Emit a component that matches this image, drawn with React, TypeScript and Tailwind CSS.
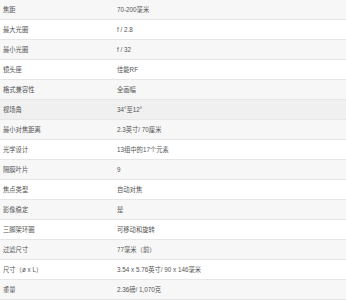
const specs: [string, string][] = [
  ['焦距', '70-200毫米'],
  ['最大光圈', 'f / 2.8'],
  ['最小光圈', 'f / 32'],
  ['镜头座', '佳能RF'],
  ['格式兼容性', '全画幅'],
  ['视场角', '34°至12°'],
  ['最小对焦距离', '2.3英寸/ 70厘米'],
  ['光学设计', '13组中的17个元素'],
  ['隔膜叶片', '9'],
  ['焦点类型', '自动对焦'],
  ['影像稳定', '是'],
  ['三脚架环圈', '可移动和旋转'],
  ['过滤尺寸', '77毫米（前）'],
  ['尺寸（ø x L）', '3.54 x 5.76英寸/ 90 x 146毫米'],
  ['重量', '2.36磅/ 1,070克'],
]

export default function App() {
  return (
    <div className="w-[346px] h-[300px] overflow-hidden bg-white font-['Liberation_Sans','Noto_Sans_CJK_SC',sans-serif] text-[6.3px] text-[#555]">
      {specs.map(([label, value], i) => {
        // row 6 is shown in its hover state
        const bg = i === 5 ? 'bg-[#f0f0f0]' : i % 2 === 0 ? 'bg-[#f7f7f7]' : 'bg-white'
        return (
          <div key={label} className={`grid grid-cols-[117px_1fr] h-[20px] items-center border-b border-[#e6e6e6] ${bg}`}>
            <div className="pl-[3px] whitespace-nowrap">{label}</div>
            <div className="whitespace-nowrap">{value}</div>
          </div>
        )
      })}
    </div>
  )
}
